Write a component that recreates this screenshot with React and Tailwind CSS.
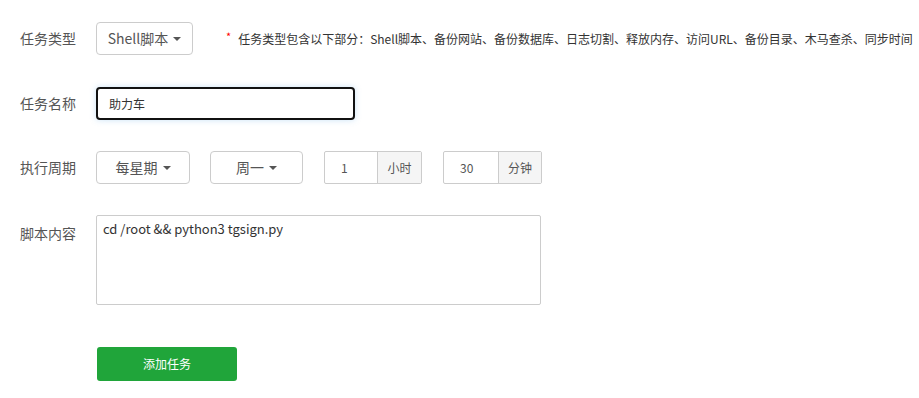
import React from "react";

const font = { fontFamily: '"Microsoft YaHei", "Noto Sans CJK SC", sans-serif' };

function Caret() {
  return (
    <span className="ml-[5px] inline-block h-0 w-0 border-x-[4px] border-t-[4px] border-x-transparent border-t-[#555] align-middle" />
  );
}

function Label({ children, className = "" }) {
  return (
    <div className={`w-[76px] shrink-0 text-[14px] leading-[33px] text-[#555] ${className}`}>
      {children}
    </div>
  );
}

function InputGroup({ value, unit, inputW, addonW }) {
  return (
    <div className="flex h-[33px] rounded-[2px] border border-[#ccc]">
      <div className={`${inputW} flex items-center pl-[16px] text-[12px] text-[#555]`}>{value}</div>
      <div className={`${addonW} flex items-center justify-center border-l border-[#ccc] bg-[#f5f5f5] text-[12px] text-[#555]`}>
        {unit}
      </div>
    </div>
  );
}

export default function App() {
  return (
    <div className="min-h-[398px] w-[919px] bg-white pl-[20px] pt-[22px]" style={font}>
      {/* Row 1 */}
      <div className="flex h-[33px] items-center">
        <Label>任务类型</Label>
        <div className="flex h-[33px] w-[97px] items-center justify-center rounded-[4px] border border-[#ccc] text-[14px] text-[#555]">
          Shell脚本
          <Caret />
        </div>
        <div className="ml-[32px] flex items-center whitespace-nowrap text-[12px] text-[#333]">
          <span className="relative -top-[2px] ml-[1px] mr-[7px] text-[11px] text-[#f00]">*</span>
          任务类型包含以下部分：Shell脚本、备份网站、备份数据库、日志切割、释放内存、访问URL、备份目录、木马查杀、同步时间
        </div>
      </div>

      {/* Row 2 */}
      <div className="mt-[32px] flex h-[33px] items-center">
        <Label>任务名称</Label>
        <div className="flex h-[33px] w-[259px] items-center rounded-[4px] border-2 border-[#111] pl-[11px] text-[12px] text-[#333] shadow-[0_0_6px_rgba(102,175,233,0.35)]">
          助力车
        </div>
      </div>

      {/* Row 3 */}
      <div className="mt-[31px] flex h-[33px] items-center">
        <Label>执行周期</Label>
        <div className="flex h-[33px] w-[94px] items-center justify-center rounded-[4px] border border-[#ccc] text-[14px] text-[#555]">
          每星期
          <Caret />
        </div>
        <div className="ml-[20px] flex h-[33px] w-[93px] items-center justify-center rounded-[4px] border border-[#ccc] text-[14px] text-[#555]">
          周一
          <Caret />
        </div>
        <div className="ml-[21px]">
          <InputGroup value="1" unit="小时" inputW="w-[52px]" addonW="w-[44px]" />
        </div>
        <div className="ml-[21px]">
          <InputGroup value="30" unit="分钟" inputW="w-[54px]" addonW="w-[43px]" />
        </div>
      </div>

      {/* Row 4 */}
      <div className="mt-[31px] flex items-start">
        <Label className="pt-[2px]">脚本内容</Label>
        <div className="h-[90px] w-[445px] rounded-[2px] border border-[#ccc] px-[6px] pt-[4px] text-[13px] leading-[18px] text-[#333]">
          cd /root &amp;&amp; python3 tgsign.py
        </div>
      </div>

      {/* Button */}
      <div className="mt-[42px] flex">
        <div className="w-[77px] shrink-0" />
        <div className="flex h-[34px] w-[140px] items-center justify-center rounded-[3px] bg-[#20a53a] text-[12px] text-white">
          添加任务
        </div>
      </div>
    </div>
  );
}
